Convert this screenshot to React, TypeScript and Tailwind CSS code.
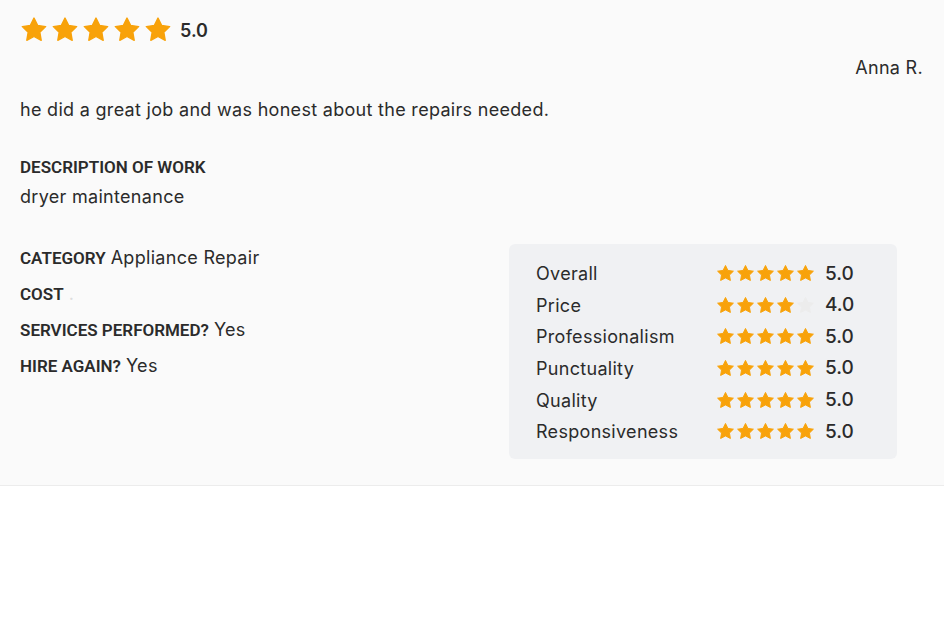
import React from "react";

const STAR = "M12 1.8l3.09 6.26 6.91 1.01-5 4.87 1.18 6.88L12 17.57l-6.18 3.25L7 13.94 2 9.07l6.91-1.01L12 1.8z";

function Star({ size, filled }: { size: number; filled: boolean }) {
  return (
    <svg width={size} height={size} viewBox="0 0 24 24" className="shrink-0">
      <path d={STAR} fill={filled ? "#f8a20a" : "#ececec"} strokeLinejoin="round" stroke={filled ? "#f8a20a" : "#ececec"} strokeWidth="1.2" />
    </svg>
  );
}

const ratings: [string, number][] = [
  ["Overall", 5],
  ["Price", 4],
  ["Professionalism", 5],
  ["Punctuality", 5],
  ["Quality", 5],
  ["Responsiveness", 5],
];

export default function App() {
  const font = { fontFamily: "Inter, 'Noto Sans', sans-serif" };
  const labelFont = "font-['Roboto',sans-serif] font-semibold text-[17px] text-[#2b2b2b]";
  const body = "text-[18px] tracking-[0.3px]";
  return (
    <div className="w-[944px] h-[624px] bg-white text-[#2b2b2b]" style={font}>
      <div className="bg-[#fafafa] border-b border-[#ececec] px-[20px] pt-[16px] h-[486px]">
        <div className="flex items-center">
          <div className="flex gap-[3px]">
            {[0, 1, 2, 3, 4].map((i) => (
              <Star key={i} size={28} filled />
            ))}
          </div>
          <span className="ml-[8px] text-[18px] font-semibold">5.0</span>
        </div>
        <div className={`flex justify-end pr-[1px] mt-[12px] leading-[24px] ${body}`}>Anna R.</div>
        <p className={`mt-[18px] leading-[24px] ${body}`}>he did a great job and was honest about the repairs needed.</p>
        <div className={`mt-[34px] leading-[22px] uppercase ${labelFont}`}>Description of Work</div>
        <div className={`mt-[7px] leading-[24px] ${body}`}>dryer maintenance</div>
        <div className="mt-[35px] flex justify-between">
          <div className="flex flex-col gap-[10px] pt-[1px]">
            <div className="flex items-baseline gap-[5px] leading-[26px]">
              <span className={`uppercase ${labelFont}`}>Category</span>
              <span className={body}>Appliance Repair</span>
            </div>
            <div className="flex items-baseline gap-[5px] leading-[26px]">
              <span className={`uppercase ${labelFont}`}>Cost</span>
              <span className={`${body} text-[#ddd]`}>.</span>
            </div>
            <div className="flex items-baseline gap-[5px] leading-[26px]">
              <span className={`uppercase ${labelFont}`}>Services Performed?</span>
              <span className={body}>Yes</span>
            </div>
            <div className="flex items-baseline gap-[5px] leading-[26px]">
              <span className={`uppercase ${labelFont}`}>Hire Again?</span>
              <span className={body}>Yes</span>
            </div>
          </div>
          <div className="mr-[27px] w-[388px] h-[215px] rounded-[6px] bg-[#f0f1f3] px-[27px] pt-[14px]">
            {ratings.map(([label, v]) => (
              <div key={label} className="flex items-center h-[31.6px]">
                <span className={`w-[180px] ${body}`}>{label}</span>
                <div className="flex gap-[1px]">
                  {[0, 1, 2, 3, 4].map((i) => (
                    <Star key={i} size={19} filled={i < v} />
                  ))}
                </div>
                <span className="ml-[10px] text-[19px] font-medium">{v.toFixed(1)}</span>
              </div>
            ))}
          </div>
        </div>
      </div>
    </div>
  );
}
